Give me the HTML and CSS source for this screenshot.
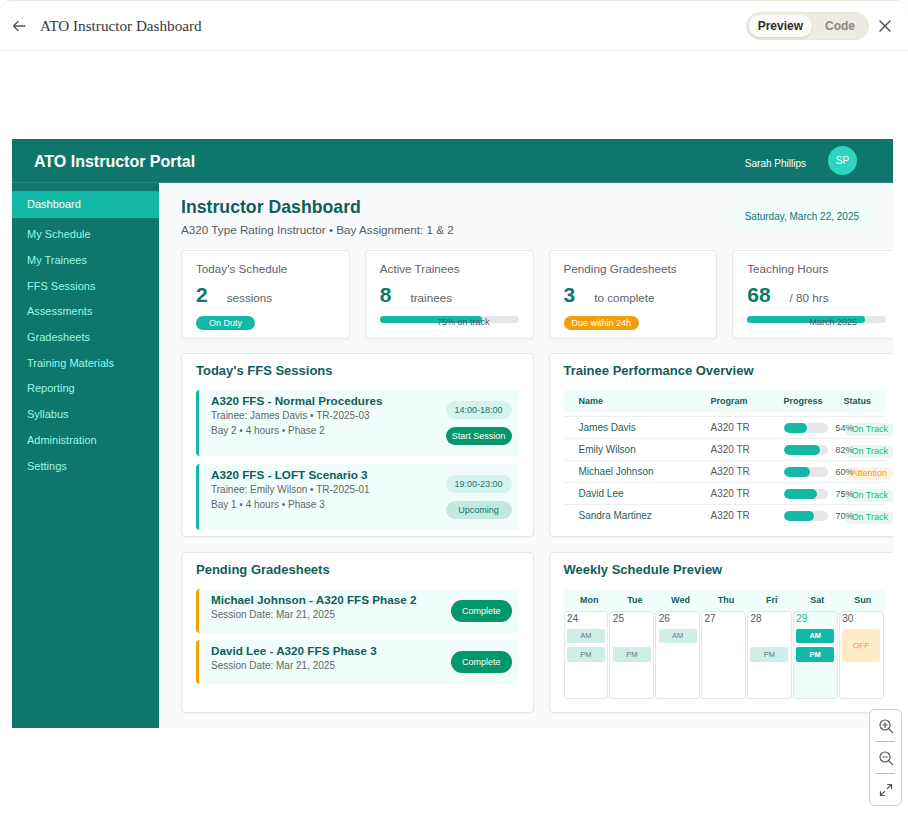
FILE: index.html
```html
<!DOCTYPE html>
<html lang="en">
<head>
<meta charset="utf-8">
<title>ATO Instructor Dashboard</title>
<link rel="stylesheet" href="styles.css">
</head>
<body>
<div class="shell">
  <header class="topbar">
    <div class="topbar-left">
      <svg class="back" width="14" height="14" viewBox="0 0 14 14" fill="none" stroke="#555" stroke-width="1.3" stroke-linecap="round" stroke-linejoin="round"><path d="M13 7H1.5M6 2.5L1.5 7 6 11.5"/></svg>
      <span class="doc-title">ATO Instructor Dashboard</span>
    </div>
    <div class="topbar-right">
      <div class="toggle"><span class="tg active">Preview</span><span class="tg code">Code</span></div>
      <svg class="close" width="12" height="12" viewBox="0 0 12 12" fill="none" stroke="#444" stroke-width="1.3" stroke-linecap="round"><path d="M1 1l10 10M11 1L1 11"/></svg>
    </div>
  </header>

  <div class="stage">
    <div class="app">
      <div class="app-header">
        <div class="brand">ATO Instructor Portal</div>
        <div class="user">
          <span class="user-name">Sarah Phillips</span>
          <span class="avatar">SP</span>
        </div>
      </div>
      <div class="app-body">
        <nav class="sidebar">
          <a class="nav-item active">Dashboard</a>
          <a class="nav-item">My Schedule</a>
          <a class="nav-item">My Trainees</a>
          <a class="nav-item">FFS Sessions</a>
          <a class="nav-item">Assessments</a>
          <a class="nav-item">Gradesheets</a>
          <a class="nav-item">Training Materials</a>
          <a class="nav-item">Reporting</a>
          <a class="nav-item">Syllabus</a>
          <a class="nav-item">Administration</a>
          <a class="nav-item">Settings</a>
        </nav>

        <main class="main">
          <div class="page-head">
            <div>
              <h1 class="page-title">Instructor Dashboard</h1>
              <div class="subtitle">A320 Type Rating Instructor • Bay Assignment: 1 &amp; 2</div>
            </div>
            <div class="date-pill">Saturday, March 22, 2025</div>
          </div>

          <div class="stats">
            <div class="card stat">
              <div class="stat-label">Today's Schedule</div>
              <div class="stat-row"><span class="stat-value">2</span><span class="stat-unit">sessions</span></div>
              <span class="badge on-duty">On Duty</span>
            </div>
            <div class="card stat">
              <div class="stat-label">Active Trainees</div>
              <div class="stat-row"><span class="stat-value">8</span><span class="stat-unit">trainees</span></div>
              <div class="progress"><div class="progress-fill" style="width:74%"></div><span class="progress-label">75% on track</span></div>
            </div>
            <div class="card stat">
              <div class="stat-label">Pending Gradesheets</div>
              <div class="stat-row"><span class="stat-value">3</span><span class="stat-unit">to complete</span></div>
              <span class="badge due">Due within 24h</span>
            </div>
            <div class="card stat">
              <div class="stat-label">Teaching Hours</div>
              <div class="stat-row"><span class="stat-value">68</span><span class="stat-unit">/ 80 hrs</span></div>
              <div class="progress"><div class="progress-fill" style="width:85%"></div><span class="progress-label">March 2025</span></div>
            </div>
          </div>

          <div class="grid2 row2">
            <section class="card panel">
              <h2 class="panel-title">Today's FFS Sessions</h2>
              <div class="session">
                <div class="info">
                  <div class="item-title">A320 FFS - Normal Procedures</div>
                  <div class="meta">Trainee: James Davis • TR-2025-03</div>
                  <div class="meta">Bay 2 • 4 hours • Phase 2</div>
                </div>
                <div class="actions">
                  <span class="time-pill">14:00-18:00</span>
                  <button class="btn btn-start">Start Session</button>
                </div>
              </div>
              <div class="session">
                <div class="info">
                  <div class="item-title">A320 FFS - LOFT Scenario 3</div>
                  <div class="meta">Trainee: Emily Wilson • TR-2025-01</div>
                  <div class="meta">Bay 1 • 4 hours • Phase 3</div>
                </div>
                <div class="actions">
                  <span class="time-pill">19:00-23:00</span>
                  <span class="time-pill upcoming">Upcoming</span>
                </div>
              </div>
            </section>

            <section class="card panel">
              <h2 class="panel-title">Trainee Performance Overview</h2>
              <div class="tbl-head">
                <span>Name</span><span>Program</span><span>Progress</span><span>Status</span>
              </div>
              <div class="tbl-row">
                <div class="c-name">James Davis</div><div class="c-prog">A320 TR</div>
                <div class="c-bar"><span class="mini"><span class="mini-fill" style="width:54%"></span></span><span class="pct">54%</span></div>
                <div class="c-status"><span class="st ok">On Track</span></div>
              </div>
              <div class="tbl-row">
                <div class="c-name">Emily Wilson</div><div class="c-prog">A320 TR</div>
                <div class="c-bar"><span class="mini"><span class="mini-fill" style="width:82%"></span></span><span class="pct">82%</span></div>
                <div class="c-status"><span class="st ok">On Track</span></div>
              </div>
              <div class="tbl-row">
                <div class="c-name">Michael Johnson</div><div class="c-prog">A320 TR</div>
                <div class="c-bar"><span class="mini"><span class="mini-fill" style="width:60%"></span></span><span class="pct">60%</span></div>
                <div class="c-status"><span class="st warn">Attention</span></div>
              </div>
              <div class="tbl-row">
                <div class="c-name">David Lee</div><div class="c-prog">A320 TR</div>
                <div class="c-bar"><span class="mini"><span class="mini-fill" style="width:75%"></span></span><span class="pct">75%</span></div>
                <div class="c-status"><span class="st ok">On Track</span></div>
              </div>
              <div class="tbl-row">
                <div class="c-name">Sandra Martinez</div><div class="c-prog">A320 TR</div>
                <div class="c-bar"><span class="mini"><span class="mini-fill" style="width:70%"></span></span><span class="pct">70%</span></div>
                <div class="c-status"><span class="st ok">On Track</span></div>
              </div>
            </section>
          </div>

          <div class="grid2">
            <section class="card panel">
              <h2 class="panel-title">Pending Gradesheets</h2>
              <div class="grade">
                <div class="info">
                  <div class="item-title">Michael Johnson - A320 FFS Phase 2</div>
                  <div class="meta">Session Date: Mar 21, 2025</div>
                </div>
                <button class="btn btn-complete">Complete</button>
              </div>
              <div class="grade">
                <div class="info">
                  <div class="item-title">David Lee - A320 FFS Phase 3</div>
                  <div class="meta">Session Date: Mar 21, 2025</div>
                </div>
                <button class="btn btn-complete">Complete</button>
              </div>
            </section>

            <section class="card panel">
              <h2 class="panel-title">Weekly Schedule Preview</h2>
              <div class="cal-head">
                <span>Mon</span><span>Tue</span><span>Wed</span><span>Thu</span><span>Fri</span><span>Sat</span><span>Sun</span>
              </div>
              <div class="cal-grid">
                <div class="day"><div class="day-num">24</div><div class="slots"><span class="slot am">AM</span><span class="slot pm">PM</span></div></div>
                <div class="day"><div class="day-num">25</div><div class="slots"><span class="slot pm">PM</span></div></div>
                <div class="day"><div class="day-num">26</div><div class="slots"><span class="slot am">AM</span></div></div>
                <div class="day"><div class="day-num">27</div><div class="slots"></div></div>
                <div class="day"><div class="day-num">28</div><div class="slots"><span class="slot pm">PM</span></div></div>
                <div class="day today"><div class="day-num">29</div><div class="slots"><span class="slot am on">AM</span><span class="slot pm on">PM</span></div></div>
                <div class="day"><div class="day-num">30</div><div class="slots"><span class="slot off">OFF</span></div></div>
              </div>
            </section>
          </div>
        </main>
      </div>
    </div>

    <div class="zoom-ctrl">
      <button class="zbtn" aria-label="Zoom in"><svg width="16" height="16" viewBox="0 0 16 16" fill="none" stroke="#555" stroke-width="1.2" stroke-linecap="round"><circle cx="7" cy="7" r="5"/><path d="M10.6 10.6L14.5 14.5M7 4.8v4.4M4.8 7h4.4"/></svg></button>
      <span class="zdiv"></span>
      <button class="zbtn" aria-label="Zoom out"><svg width="16" height="16" viewBox="0 0 16 16" fill="none" stroke="#555" stroke-width="1.2" stroke-linecap="round"><circle cx="7" cy="7" r="5"/><path d="M10.6 10.6L14.5 14.5M4.8 7h4.4"/></svg></button>
      <span class="zdiv"></span>
      <button class="zbtn" aria-label="Fit"><svg width="16" height="16" viewBox="0 0 16 16" fill="none" stroke="#555" stroke-width="1.2" stroke-linecap="round" stroke-linejoin="round"><path d="M9.5 2.5h4v4M13.5 2.5L9.3 6.7M6.5 13.5h-4v-4M2.5 13.5l4.2-4.2"/></svg></button>
    </div>
  </div>
</div>
</body>
</html>
```

FILE: styles.css
```css
* { box-sizing: border-box; }

html, body {
  margin: 0;
  padding: 0;
  background: #ffffff;
}

body {
  width: 908px;
  height: 815px;
  overflow: hidden;
  font-family: "Liberation Sans", Arial, sans-serif;
}

.shell {
  height: 815px;
  border-top: 1px solid #ebe8e1;
  border-radius: 12px 12px 0 0;
}

/* ---------- outer top bar ---------- */
.topbar {
  height: 50px;
  display: flex;
  align-items: center;
  justify-content: space-between;
  padding: 0 17px 0 12px;
  border-bottom: 1px solid #f0eee9;
}

.topbar-left,
.topbar-right {
  display: flex;
  align-items: center;
}

.back { display: block; }

.doc-title {
  margin-left: 14px;
  font-family: "Liberation Serif", "Times New Roman", serif;
  font-size: 15.2px;
  color: #3a3935;
}

.toggle {
  display: flex;
  align-items: center;
  height: 28px;
  padding: 2px;
  border: 1px solid #e7e4dc;
  border-radius: 14px;
  background: #eeebe4;
}

.tg {
  height: 22px;
  line-height: 22px;
  padding: 0 9px;
  border-radius: 11px;
  font-size: 12px;
  font-weight: bold;
  color: #8a877f;
}

.tg.active {
  background: #fbfaf7;
  color: #2f2e2b;
  box-shadow: 0 1px 2px rgba(0, 0, 0, 0.12);
}

.tg.code { padding: 0 11px 0 13px; }

.close {
  display: block;
  margin-left: 10px;
}

/* ---------- stage ---------- */
.stage {
  position: relative;
  height: 764px;
  display: flex;
  align-items: center;
}

.app {
  width: 881px;
  margin-left: 12px;
  overflow: hidden;
  display: flex;
  flex-direction: column;
}

.app-header {
  height: 44px;
  display: flex;
  align-items: center;
  justify-content: space-between;
  padding: 0 36px 0 22px;
  background: #0f766e;
  border-bottom: 1px solid rgba(255, 255, 255, 0.12);
}

.brand {
  margin-top: 3px;
  font-size: 16px;
  font-weight: bold;
  color: #ffffff;
}

.user {
  display: flex;
  align-items: center;
  gap: 22px;
}

.user-name {
  font-size: 10px;
  color: #ffffff;
  margin-top: 6px;
}

.avatar {
  width: 29px;
  height: 29px;
  border-radius: 50%;
  background: #2dd4bf;
  color: #ffffff;
  font-size: 10px;
  display: flex;
  align-items: center;
  justify-content: center;
}

.app-body {
  display: flex;
}

/* ---------- sidebar ---------- */
.sidebar {
  width: 147px;
  flex-shrink: 0;
  background: #0f766e;
  padding-top: 8px;
}

.nav-item {
  display: block;
  padding: 6px 15px;
  line-height: 13.7px;
  font-size: 11px;
  color: #99f6e4;
  text-decoration: none;
}

.nav-item.active {
  padding: 7px 15px;
  margin-bottom: 4px;
  background: #14b8a6;
  color: #ffffff;
}

/* ---------- main ---------- */
.main {
  flex: 1;
  min-width: 0;
  background: #f8fafc;
  padding: 13px 22px 15px;
}

.page-head {
  display: flex;
  align-items: center;
  justify-content: space-between;
  margin-bottom: 12px;
}

.page-title {
  margin: 0;
  font-size: 17.7px;
  line-height: 22px;
  font-weight: bold;
  color: #115e59;
}

.subtitle {
  margin-top: 4px;
  font-size: 11.7px;
  line-height: 16px;
  color: #575d63;
}

.date-pill {
  height: 22px;
  line-height: 22px;
  padding: 0 12px;
  border-radius: 6px;
  background: #f0fdfa;
  color: #0f766e;
  font-size: 10px;
}

.card {
  background: #ffffff;
  border: 1px solid #e5e7eb;
  border-radius: 4px;
  box-shadow: 0 1px 2px rgba(0, 0, 0, 0.03);
}

/* stats */
.stats {
  width: 720px;
  display: grid;
  grid-template-columns: repeat(4, minmax(0, 1fr));
  gap: 15px;
  margin-bottom: 14px;
}

.stat {
  display: flex;
  flex-direction: column;
  align-items: flex-start;
  padding: 10px 14px 8px;
}

.stat-label {
  font-size: 11.7px;
  line-height: 16px;
  color: #5f6368;
}

.stat-row {
  display: flex;
  align-items: baseline;
  gap: 19px;
  margin-top: 5px;
  line-height: 26px;
  height: 26px;
}

.stat-value {
  font-size: 21px;
  font-weight: bold;
  color: #0f766e;
}

.stat-unit {
  font-size: 11.7px;
  color: #5f6368;
}

.badge {
  margin-top: 8px;
  height: 14px;
  line-height: 14px;
  padding: 0 8px;
  border-radius: 7px;
  font-size: 9px;
  color: #ffffff;
}

.badge.on-duty {
  padding: 0 13px;
  background: #14b8a6;
}

.badge.due { background: #f59e0b; }

.progress {
  position: relative;
  align-self: stretch;
  margin-top: 8px;
  height: 7px;
  border-radius: 4px;
  background: #e5e7eb;
}

.progress-fill {
  height: 100%;
  border-radius: 4px;
  background: #14b8a6;
}

.progress-label {
  position: absolute;
  right: 29px;
  top: 1px;
  font-size: 9px;
  line-height: 11px;
  color: #4b5563;
  white-space: nowrap;
}

/* panels */
.grid2 {
  width: 720px;
  display: grid;
  grid-template-columns: minmax(0, 1fr) minmax(0, 1fr);
  gap: 15px;
}

.row2 { margin-bottom: 15px; }

.panel {
  padding: 9px 14px 6px;
}

.panel-title {
  margin: 0 0 11px;
  font-size: 13px;
  line-height: 16px;
  font-weight: bold;
  color: #115e59;
}

.session,
.grade {
  display: flex;
  justify-content: space-between;
  align-items: flex-start;
  padding: 3px 7px 3px 12px;
  border-radius: 4px;
  background: #f0fdfa;
}

.session {
  border-left: 3px solid #14b8a6;
  margin-bottom: 8px;
}

.grade {
  border-left: 3px solid #f59e0b;
  margin-bottom: 7px;
}

.session:last-child,
.grade:last-child { margin-bottom: 0; }

.item-title {
  font-size: 11.7px;
  line-height: 15px;
  font-weight: bold;
  color: #115e59;
  white-space: nowrap;
}

.meta {
  font-size: 10px;
  line-height: 15px;
  color: #666666;
  white-space: nowrap;
}

.actions {
  align-self: center;
  display: flex;
  flex-direction: column;
  gap: 8px;
  width: 66px;
  margin: 8px 0;
}

.time-pill {
  height: 18px;
  line-height: 18px;
  text-align: center;
  border-radius: 9px;
  background: #d5f3ec;
  color: #0f766e;
  font-size: 9px;
}

.time-pill.upcoming { background: #c3e9de; }

.btn {
  border: none;
  font-family: "Liberation Sans", Arial, sans-serif;
  font-size: 9px;
  color: #ffffff;
  background: #059669;
  padding: 0;
}

.btn-start {
  height: 18px;
  border-radius: 9px;
}

.btn-complete {
  align-self: center;
  height: 22px;
  padding: 0 11px;
  margin: 8px 0;
  border-radius: 11px;
}

/* table */
.tbl-head,
.tbl-row {
  display: grid;
  grid-template-columns: 132px 73px 60px 1fr;
}

.tbl-head {
  height: 22px;
  align-items: center;
  margin-bottom: 4px;
  background: #f0fdfa;
  font-size: 9px;
  font-weight: bold;
  color: #115e59;
}

.tbl-head span,
.tbl-row > div {
  padding-left: 15px;
  white-space: nowrap;
}

.tbl-row {
  height: 22px;
  align-items: center;
  border-top: 1px solid #eceff1;
  font-size: 10px;
}

.c-name { color: #1d5f59; }
.c-prog { color: #555b60; }

.c-bar {
  display: flex;
  align-items: center;
  gap: 8px;
  padding-top: 2px;
}

.mini {
  display: block;
  flex-shrink: 0;
  width: 44px;
  height: 10px;
  border-radius: 5px;
  background: #e5e7eb;
  overflow: hidden;
}

.mini-fill {
  display: block;
  height: 100%;
  border-radius: 5px;
  background: #14b8a6;
}

.pct {
  font-size: 9px;
  color: #555b60;
}

.c-status {
  align-self: start;
  padding-top: 6px;
}

.st {
  display: inline-block;
  height: 13px;
  line-height: 13px;
  padding: 0 7px 0 8px;
  border-radius: 7px;
  font-size: 9px;
}

.st.ok { background: rgba(16, 185, 129, 0.1); color: #10b981; }
.st.warn { background: rgba(245, 158, 11, 0.12); color: #f59e0b; }

/* calendar */
.cal-head {
  display: grid;
  grid-template-columns: repeat(7, 45.6px);
  height: 22px;
  align-items: center;
  padding-left: 3px;
  background: #f0fdfa;
  font-size: 9px;
  font-weight: bold;
  color: #115e59;
  text-align: center;
}

.cal-grid {
  width: 320px;
  display: grid;
  grid-template-columns: repeat(7, 1fr);
  gap: 1px;
  margin-bottom: 7px;
}

.day {
  height: 88px;
  padding: 1px 2.5px;
  border: 1px solid #e5e7eb;
  border-radius: 3px;
  background: #ffffff;
}

.day.today { background: #f0fdfa; }

.day-num {
  font-size: 10px;
  line-height: 11px;
  color: #555b60;
}

.today .day-num { color: #14b8a6; }

.slots {
  display: grid;
  grid-template-rows: 14.4px 14.4px;
  row-gap: 4.3px;
  margin-top: 5px;
}

.slot {
  display: flex;
  align-items: center;
  justify-content: center;
  border-radius: 2px;
  background: #cfeee8;
  color: #5c7c77;
  font-size: 7.5px;
}

.slot.am { grid-row: 1; }
.slot.pm { grid-row: 2; }

.slot.on {
  background: #14b8a6;
  color: #ffffff;
  font-weight: bold;
}

.slot.off {
  grid-row: 1 / span 2;
  background: #feebc8;
  color: #f59e0b;
  font-size: 8px;
}

/* zoom control */
.zoom-ctrl {
  position: absolute;
  right: 6px;
  bottom: 9px;
  width: 33px;
  height: 97px;
  display: flex;
  flex-direction: column;
  align-items: center;
  border: 1px solid #cfcfcf;
  border-radius: 6px;
  background: #ffffff;
}

.zbtn {
  width: 31px;
  height: 31.5px;
  border: none;
  background: transparent;
  padding: 0;
  display: flex;
  align-items: center;
  justify-content: center;
}

.zdiv {
  display: block;
  width: 19px;
  height: 1px;
  background: #bdbdbd;
}
```
